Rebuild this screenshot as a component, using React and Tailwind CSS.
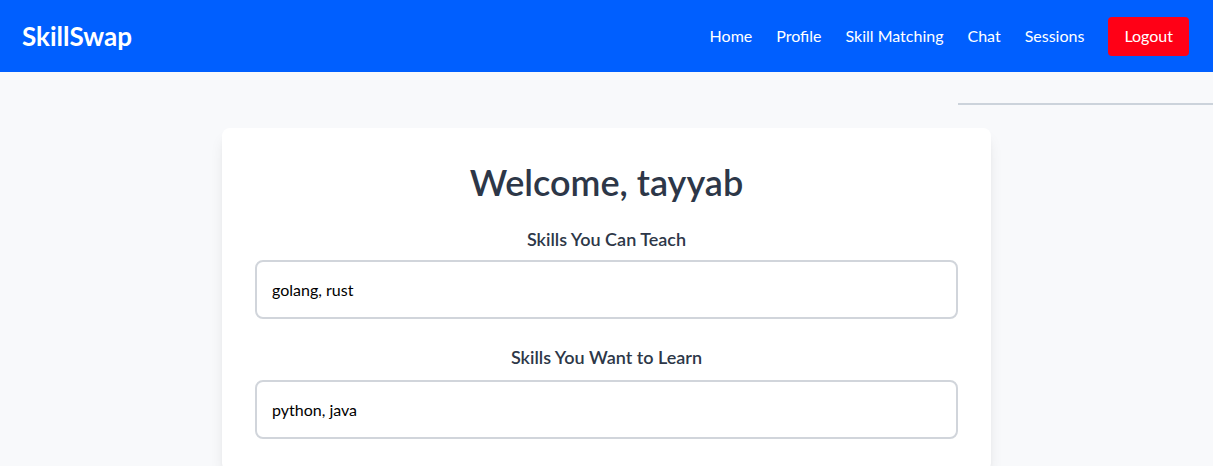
import React from 'react';

export default function App() {
  const links = ['Home', 'Profile', 'Skill Matching', 'Chat', 'Sessions'];

  return (
    <div className="min-h-screen bg-[#f8f9fb] font-['Lato','Open_Sans',sans-serif]">
      {/* Navbar */}
      <nav className="h-[72px] bg-[#005fff] pl-[22px] pr-6 flex items-center justify-between">
        <h1 className="text-[26px] font-bold text-white">SkillSwap</h1>
        <div className="flex items-center gap-6">
          {links.map((l) => (
            <a key={l} href="#" className="text-white text-[16px]">{l}</a>
          ))}
          <button className="bg-[#ff0016] text-white text-[16px] px-4 h-[39px] rounded">Logout</button>
        </div>
      </nav>

      <div className="flex justify-end pt-[31px]">
        <div className="w-[255px] h-[2px] bg-[#ccd3db]" />
      </div>

      {/* Card */}
      <div className="max-w-[769px] mx-auto mt-[23px] bg-white rounded-lg shadow-lg pl-[33px] pr-[33px] pt-[30px] pb-8">
        <h2 className="text-center text-[36px] font-semibold text-[#2d3748] leading-[48px]">Welcome, tayyab</h2>

        <div className="mt-[20px]">
          <label className="block text-center text-[18px] font-semibold text-[#2d3748] mb-[7px]">Skills You Can Teach</label>
          <input
            readOnly
            value="golang, rust"
            className="w-full h-[59px] border-2 border-[#d1d5db] rounded-lg px-[15px] text-[16px] text-black outline-none"
          />
        </div>

        <div className="mt-[25px]">
          <label className="block text-center text-[18px] font-semibold text-[#2d3748] mb-[9px]">Skills You Want to Learn</label>
          <input
            readOnly
            value="python, java"
            className="w-full h-[59px] border-2 border-[#d1d5db] rounded-lg px-[15px] text-[16px] text-black outline-none"
          />
        </div>
      </div>
    </div>
  );
}
